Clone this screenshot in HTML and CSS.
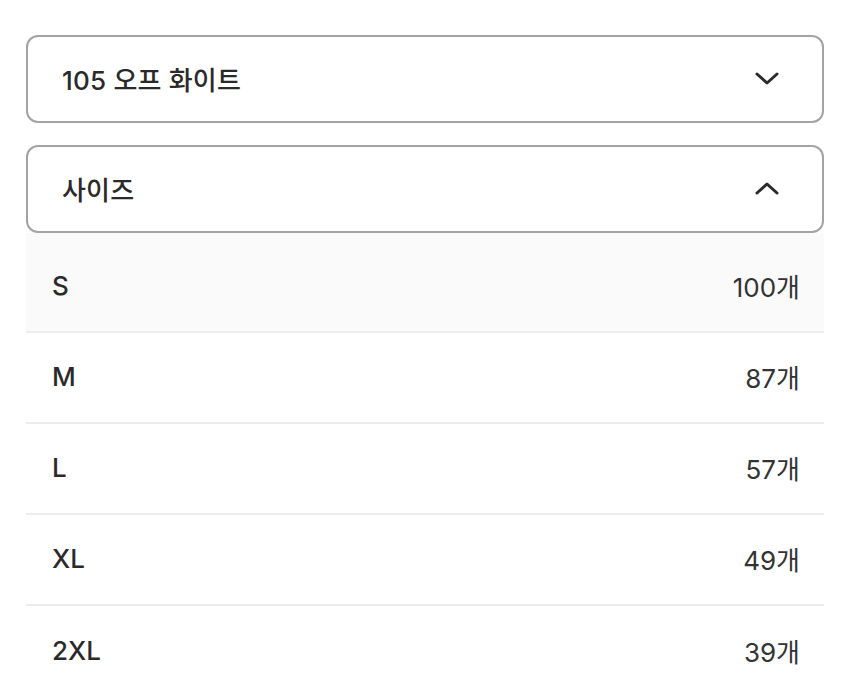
FILE: index.html
```html
<!DOCTYPE html>
<html lang="ko">
<head>
  <meta charset="UTF-8">
  <title>옵션 선택</title>
  <link rel="stylesheet" href="styles.css">
</head>
<body>
  <div class="options">
    <div class="select">
      <span class="select-label">105 오프 화이트</span>
      <svg class="chevron" width="26" height="15" viewBox="0 0 26 15">
        <polyline points="3,3 13,12 23,3" />
      </svg>
    </div>

    <div class="select">
      <span class="select-label">사이즈</span>
      <svg class="chevron" width="26" height="15" viewBox="0 0 26 15">
        <polyline points="3,12 13,3 23,12" />
      </svg>
    </div>

    <ul class="size-list">
      <li class="size-item active"><span>S</span><span class="stock">100개</span></li>
      <li class="size-item"><span>M</span><span class="stock">87개</span></li>
      <li class="size-item"><span>L</span><span class="stock">57개</span></li>
      <li class="size-item"><span>XL</span><span class="stock">49개</span></li>
      <li class="size-item"><span>2XL</span><span class="stock">39개</span></li>
    </ul>
  </div>
</body>
</html>
```

FILE: styles.css
```css
body {
  margin: 0;
  background: white;
  font-family: Inter, "Noto Sans CJK KR", sans-serif;
  font-weight: 500;
  color: #2a2a2a;
}

.options {
  width: 798px;
  padding: 35px 0 0 26px;
}

.select {
  box-sizing: border-box;
  height: 88px;
  border: 2px solid #a3a3a3;
  border-radius: 12px;
  display: flex;
  align-items: center;
  justify-content: space-between;
  padding: 0 42px 2px 34px;
  margin-bottom: 22px;
  font-size: 26px;
}

.select:nth-child(2) {
  margin-bottom: 0;
}

.select-label {
  letter-spacing: 0.2px;
}

.chevron polyline {
  fill: none;
  stroke: #2a2a2a;
  stroke-width: 3;
  stroke-linecap: round;
  stroke-linejoin: round;
}

.size-list {
  list-style: none;
  margin: 0;
  padding: 0;
}

.size-item {
  box-sizing: border-box;
  height: 91px;
  border-bottom: 2px solid #ededed;
  display: flex;
  align-items: center;
  justify-content: space-between;
  padding: 0 24px 2px 26px;
  font-size: 26px;
}

.size-item.active {
  height: 100px;
  padding-top: 9px;
  background-color: #fafafa;
}

.size-item:last-child {
  border-bottom: none;
}

.stock {
  font-weight: 400;
  color: #333;
}
```
